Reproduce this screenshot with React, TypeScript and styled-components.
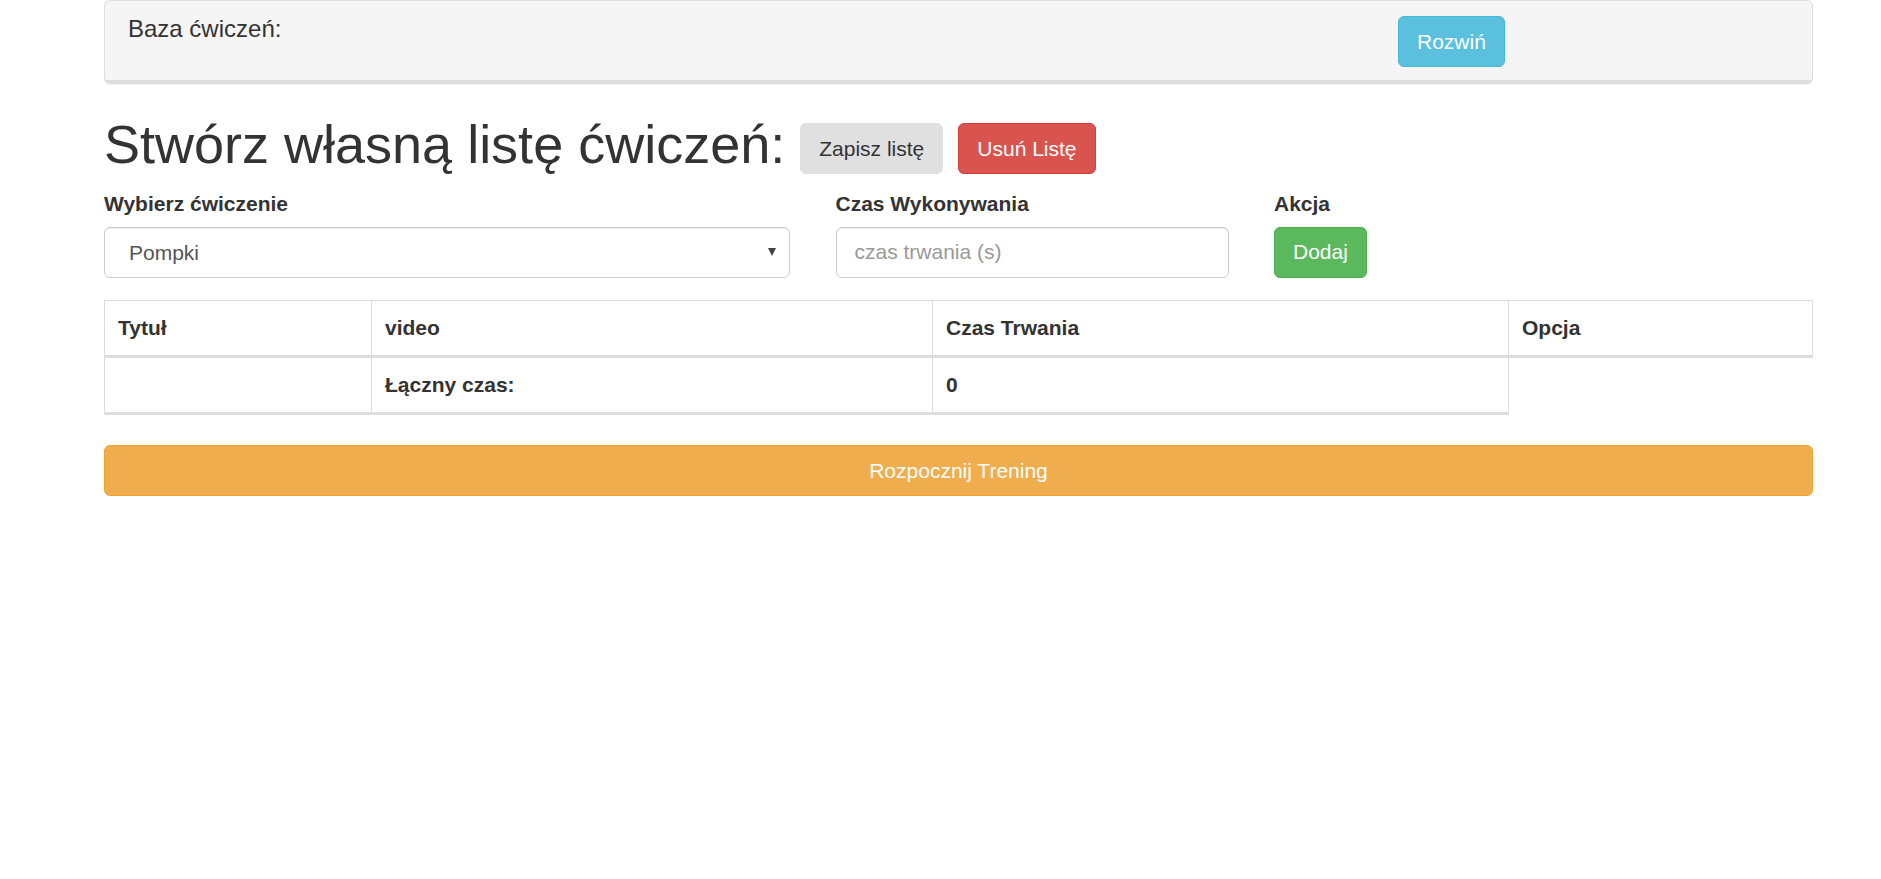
import React from 'react';
import styled, { createGlobalStyle, css } from 'styled-components';

const GlobalStyle = createGlobalStyle`
  * { box-sizing: border-box; }
  html, body {
    margin: 0;
    padding: 0;
    background: #ffffff;
  }
  body {
    font-family: 'Liberation Sans', Arial, Helvetica, sans-serif;
    font-size: 21px;
    line-height: 1.42857;
    color: #333333;
  }
`;

type Variant = 'info' | 'default' | 'danger' | 'success' | 'warning';

const variants: Record<Variant, { bg: string; border: string; color: string }> = {
  info: { bg: '#5bc0de', border: '#46b8da', color: '#ffffff' },
  default: { bg: '#e0e0e0', border: '#e0e0e0', color: '#333333' },
  danger: { bg: '#d9534f', border: '#d43f3a', color: '#ffffff' },
  success: { bg: '#5cb85c', border: '#4cae4c', color: '#ffffff' },
  warning: { bg: '#f0ad4e', border: '#eea236', color: '#ffffff' }
};

const Page = styled.div`
  width: 1709px;
  margin-left: 104px;
`;

const Panel = styled.div`
  background: #f5f5f5;
  border: 1px solid #dddddd;
  border-bottom: 4px solid #dddddd;
  border-radius: 6px;
  box-shadow: 0 1px 1px rgba(0, 0, 0, 0.05);
  padding: 15px 22px 13px 23px;
  margin-bottom: 31px;
  display: flex;
  align-items: flex-start;
`;

const PanelTitle = styled.h3`
  margin: 0;
  width: 1270px;
  font-size: 24px;
  font-weight: 500;
  line-height: 1.1;
  color: #333333;
`;

const Button = styled.button<{ $variant: Variant; $block?: boolean }>`
  display: inline-block;
  height: 51px;
  padding: 0 18px;
  font-family: inherit;
  font-size: 21px;
  font-weight: 400;
  line-height: 48px;
  border-radius: 6px;
  cursor: pointer;
  vertical-align: middle;
  white-space: nowrap;
  background: ${p => variants[p.$variant].bg};
  border: 1.5px solid ${p => variants[p.$variant].border};
  color: ${p => variants[p.$variant].color};
  ${p => p.$block && css`
    display: block;
    width: 100%;
    text-align: center;
  `}
`;

const Heading = styled.h1`
  font-size: 54px;
  font-weight: 500;
  line-height: 1.1;
  margin: 0 0 15px;
  color: #333333;
`;

const FormRow = styled.div`
  display: grid;
  grid-template-columns: 686px 393px auto;
  column-gap: 45.5px;
  margin-bottom: 22.5px;
`;

const FormGroup = styled.div`
  display: flex;
  flex-direction: column;
  align-items: flex-start;
`;

const Label = styled.label`
  display: block;
  font-weight: 700;
  line-height: 30px;
  margin-bottom: 7.5px;
`;

const SelectWrap = styled.div`
  position: relative;
  width: 100%;
`;

const Select = styled.select`
  appearance: none;
  -webkit-appearance: none;
  width: 100%;
  height: 51px;
  padding: 0 24px;
  font-family: inherit;
  font-size: 21px;
  color: #555555;
  background: #ffffff;
  border: 1.5px solid #cccccc;
  border-radius: 6px;
  box-shadow: inset 0 1px 1px rgba(0, 0, 0, 0.075);
  outline: none;
`;

const Caret = styled.span`
  position: absolute;
  right: 14px;
  top: 21px;
  width: 0;
  height: 0;
  border-left: 4px solid transparent;
  border-right: 4px solid transparent;
  border-top: 8px solid #444444;
  pointer-events: none;
`;

const Input = styled.input`
  width: 100%;
  height: 51px;
  padding: 0 18px;
  font-family: inherit;
  font-size: 21px;
  color: #555555;
  background: #ffffff;
  border: 1.5px solid #cccccc;
  border-radius: 6px;
  box-shadow: inset 0 1px 1px rgba(0, 0, 0, 0.075);
  outline: none;

  &::placeholder {
    color: #999999;
  }
`;

const Table = styled.table`
  width: 100%;
  border-collapse: collapse;
  table-layout: fixed;
  margin-bottom: 30px;
`;

const Th = styled.th<{ $w?: number }>`
  width: ${p => (p.$w ? `${p.$w}px` : 'auto')};
  text-align: left;
  font-weight: 700;
  line-height: 30px;
  padding: 12px 12px 12px 13px;
  border: 1px solid #dddddd;
  border-bottom: 3px solid #dddddd;
  vertical-align: bottom;
`;

const Td = styled.td`
  text-align: left;
  font-weight: 700;
  line-height: 30px;
  padding: 12px 12px 12px 13px;
  border: 1px solid #dddddd;
  border-top: none;
  border-bottom: 3px solid #dddddd;
  vertical-align: top;
`;

export default function App() {
  return (
    <>
      <GlobalStyle />
      <Page>
        <Panel>
          <PanelTitle>Baza ćwiczeń:</PanelTitle>
          <Button $variant="info">Rozwiń</Button>
        </Panel>

        <Heading>
          Stwórz własną listę ćwiczeń:{' '}
          <Button $variant="default">Zapisz listę</Button>{' '}
          <Button $variant="danger">Usuń Listę</Button>
        </Heading>

        <FormRow>
          <FormGroup>
            <Label>Wybierz ćwiczenie</Label>
            <SelectWrap>
              <Select defaultValue="Pompki">
                <option>Pompki</option>
              </Select>
              <Caret />
            </SelectWrap>
          </FormGroup>
          <FormGroup>
            <Label>Czas Wykonywania</Label>
            <Input placeholder="czas trwania (s)" />
          </FormGroup>
          <FormGroup>
            <Label>Akcja</Label>
            <Button $variant="success">Dodaj</Button>
          </FormGroup>
        </FormRow>

        <Table>
          <thead>
            <tr>
              <Th $w={267}>Tytuł</Th>
              <Th $w={561}>video</Th>
              <Th $w={576}>Czas Trwania</Th>
              <Th>Opcja</Th>
            </tr>
          </thead>
          <tbody>
            <tr>
              <Td />
              <Td>Łączny czas:</Td>
              <Td>0</Td>
            </tr>
          </tbody>
        </Table>

        <Button $variant="warning" $block>Rozpocznij Trening</Button>
      </Page>
    </>
  );
}
